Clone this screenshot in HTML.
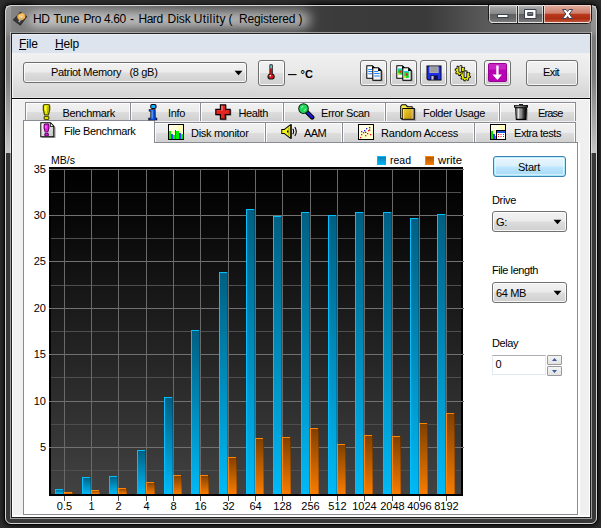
<!DOCTYPE html>
<html><head><meta charset="utf-8"><title>HD Tune Pro 4.60 - Hard Disk Utility</title>
<style>
html,body{margin:0;padding:0}
body{width:601px;height:528px;overflow:hidden;position:relative;background:#2d2d2d;font-family:"Liberation Sans",sans-serif;font-size:11px;color:#000}
*{box-sizing:border-box}
.abs{position:absolute}
#win{position:absolute;left:4px;top:4px;width:594px;height:521px;border:1px solid #060606;border-radius:7px;background:#383838;box-shadow:0 0 5px 1px rgba(0,0,0,.75);overflow:hidden}
#winhi{position:absolute;left:5px;top:5px;width:592px;height:519px;border:1px solid rgba(255,255,255,.78);border-radius:6px;pointer-events:none}
#tbar{position:absolute;left:6px;top:6px;width:590px;height:26px;background:linear-gradient(90deg,#8a8a8a 0,#707070 30px,#4a4a4a 200px,#3b3b3b 330px,#3a3a3a 420px,#5a5a5a 480px,#787878 590px)}
#glow{position:absolute;left:28px;top:11px;width:282px;height:17px;background:rgba(255,255,255,.62);filter:blur(6px);border-radius:8px}
#title{position:absolute;left:34px;top:11px;font-size:12px;line-height:14px;white-space:pre;color:#000;letter-spacing:0px}
.side{position:absolute;top:6px;width:5px;height:147px;background:linear-gradient(180deg,#9c9c9c 0,#8c8c8c 26px,#7a7a7a 32px,#7c7c7c 70px,#c6c6c6 147px)}
#client{position:absolute;left:12px;top:34px;width:578px;height:483px;background:#f0f0f0;box-shadow:inset 1px 0 0 #fff,inset -1px 0 0 #fff,inset 0 -2px 0 #fff}
#inb{position:absolute;left:10px;top:32px;width:582px;height:487px;border:1px solid rgba(255,255,255,.5);pointer-events:none}
#inb2{position:absolute;left:11px;top:33px;width:580px;height:485px;border:1px solid #202020;pointer-events:none}
#menu{position:absolute;left:12px;top:34px;width:578px;height:19px;background:#dde4ee;border-top:1px solid #e9eef7}
.mi{position:absolute;top:37.3px;letter-spacing:-.15px;font-size:12px;line-height:14px}
.mi u{text-decoration:underline;text-underline-offset:1px}
#tool{position:absolute;left:12px;top:53px;width:578px;height:45px;background:linear-gradient(180deg,#f1f1f1 0,#e8e8e8 45%,#d3d3d3 100%);box-shadow:inset 1px 0 0 rgba(255,255,255,.75),inset -1px 0 0 rgba(255,255,255,.6),inset 0 -1px 0 #e4e4e4}
#tline{position:absolute;left:12px;top:98px;width:578px;height:1px;background:#050505}
#tline2{position:absolute;left:12px;top:99px;width:578px;height:1px;background:#fff}
.btn{position:absolute;border:1px solid #707070;border-radius:3px;background:linear-gradient(180deg,#f2f2f2 0,#ebebeb 48%,#dddddd 52%,#cfcfcf 100%);box-shadow:inset 0 0 0 1px rgba(255,255,255,.8);text-align:center}
.tab{position:absolute;border:1px solid #898c95;border-bottom:none;box-shadow:inset 1px 1px 0 rgba(255,255,255,.85),inset -1px 0 0 rgba(255,255,255,.85);background:linear-gradient(180deg,#f2f2f2 0,#ebebeb 50%,#dddddd 52%,#cfcfcf 100%);height:18px;white-space:nowrap}
.tab span{position:absolute;top:3px;line-height:13px;font-size:11px}
.lbl{position:absolute;font-size:11px;line-height:13px;white-space:nowrap}
.chart{position:absolute;left:0;top:0}
.tx{position:absolute;white-space:pre}
.capb{border:1px solid rgba(255,255,255,.62);border-top-color:rgba(255,255,255,.75);background:linear-gradient(180deg,#b6b6b6 0,#a0a0a0 12%,#8a8a8a 47%,#5e5e5e 50%,#686868 80%,#7c7c7c 100%)}
.spin{width:15px;height:10px;border:1px solid #9a9a9a;border-radius:1px;background:linear-gradient(180deg,#f4f4f4,#e2e2e2)}
</style></head><body>
<div id="win"></div>
<div id="tbar"></div>
<div class="side" style="left:6px"></div>
<div class="side" style="left:591px"></div>
<div id="glow"></div>
<div id="winhi"></div>
<div id="inb"></div><div id="inb2"></div>
<div id="client"></div>
<div id="menu"></div>
<div class="mi" style="left:19px"><u>F</u>ile</div>
<div class="mi" style="left:55px"><u>H</u>elp</div>
<div id="tool"></div><div id="tline"></div><div id="tline2"></div>

<div class="abs" style="left:488px;top:5px;width:104px;height:19px;border:1px solid #1c1c1c;border-top:none;border-radius:0 0 5px 5px;background:#fff"></div>
<div class="abs capb" style="left:489px;top:5px;width:28px;height:18px;border-radius:0 0 0 4px"></div>
<div class="abs capb" style="left:518px;top:5px;width:25px;height:18px"></div>
<div class="abs" style="left:517px;top:6px;width:1px;height:17px;background:#2a2a2a"></div>
<div class="abs" style="left:543px;top:6px;width:1px;height:17px;background:#3a1510"></div>
<div class="abs" style="left:544px;top:5px;width:47px;height:18px;border:1px solid rgba(255,255,255,.62);border-top-color:rgba(255,255,255,.75);border-radius:0 0 4px 0;background:linear-gradient(180deg,#dfa999 0,#cf806b 45%,#bb3a1e 52%,#ad2d12 78%,#bd5238 100%)"></div>
<svg class="abs" style="left:489px;top:5px" width="102" height="18" viewBox="0 0 102 18">
<rect x="8.5" y="9.5" width="10.5" height="3" fill="#fff" stroke="#3a3f4f" stroke-width="1"/>
<path d="M35.5 4.5h11.5v9h-11.5z M38.7 7.6v2.8h5.1v-2.8z" fill="#fff" fill-rule="evenodd" stroke="#3a3f4f" stroke-width="1"/>
<path d="M73.5 4.5h3.6l1.5 2 1.5-2h3.6l-3.3 4.5 3.3 4.5h-3.6l-1.5-2-1.5 2h-3.6l3.3-4.5z" fill="#fff" stroke="#3c4254" stroke-width="1" stroke-linejoin="round"/>
</svg>

<svg class="abs" style="left:10px;top:8px" width="20" height="20" viewBox="10 8 20 20"><path d="M20.3 11.7L27.3 16.4 20.4 25.7 12.8 20.1z" fill="#2a2a2c"/><path d="M20.3 12.6L26.2 16.5 20.3 24.4 14 19.9z" fill="#3a3a3e"/><ellipse cx="21.3" cy="16.7" rx="4.1" ry="3.5" fill="#f0b448" transform="rotate(-20 21.3 16.7)"/><ellipse cx="21.6" cy="16" rx="2.6" ry="1.8" fill="#f8d080" opacity=".7" transform="rotate(-20 21.3 16.7)"/><circle cx="21.2" cy="16.8" r="1.1" fill="#d4d4e4"/><path d="M20.6 18.2l-2.4 3.4 1.4 1 2-3.8z" fill="#b4aaa2"/></svg>
<div class="btn" style="left:23px;top:62px;width:224px;height:21px"></div>
<svg class="abs" style="left:234px;top:70px" width="9" height="6" viewBox="0 0 9 6"><path d="M0.5 0.8h8L4.5 5.2z" fill="#000"/></svg>
<div class="btn" style="left:258px;top:60px;width:27px;height:26px"></div>
<svg class="abs" style="left:264px;top:64.3px" width="16" height="16" viewBox="0 0 16 16"><path d="M5.4 1.2q0-1 1-1h1.4q1 0 1 1v8.2q2 1 2 3 0 3.2-3.7 3.2T3.4 12.4q0-2 2-3z" fill="#1a1a1a"/><path d="M6.3 1.4h1.6v9l1.6 1.2v1.2l-1.2 1.6H6l-1.4-1.4v-1.4l1.7-1.2z" fill="#e81010"/><rect x="6.3" y="1.2" width="1.6" height="3.2" fill="#30e0e8"/><rect x="5.6" y="11" width="1.4" height="1.4" fill="#fff"/></svg>
<div class="btn" style="left:360px;top:60px;width:27px;height:26px"></div>
<div class="btn" style="left:390px;top:60px;width:27px;height:26px"></div>
<div class="btn" style="left:420px;top:60px;width:27px;height:26px"></div>
<div class="btn" style="left:450px;top:60px;width:27px;height:26px"></div>
<div class="btn" style="left:484px;top:60px;width:27px;height:26px"></div>
<div class="btn" style="left:526px;top:60px;width:52px;height:26px"></div>
<svg class="abs" style="left:366px;top:65px" width="17" height="17" viewBox="0 0 17 17"><path d="M7.6 3.6h6.6l2.6 2.6v10H7.6z" fill="#555" opacity=".45"/><path d="M0.3 0.3h6.4l3 3v10.4H0.3z" fill="#000"/><path d="M1.3 1.3h4.8v2.6h2.6v8.8H1.3z" fill="#fff"/><path d="M2.2 4h4v1h-4zM2.2 6h4v1h-4zM2.2 8.3h4v1h-4z" fill="#1888ff"/>
<path d="M6.3 2.3h6.4l3 3v10.4H6.3z" fill="#000"/><path d="M7.3 3.3h4.8v2.6h2.6v8.8H7.3z" fill="#f4f4f4"/><path d="M8.2 6h4v1h-4zM8.2 8h5.4v1H8.2zM8.2 10.4h5.4v1H8.2z" fill="#1888ff"/></svg>
<svg class="abs" style="left:396px;top:65px" width="17" height="17" viewBox="0 0 17 17"><path d="M7.6 3.6h6.6l2.6 2.6v10H7.6z" fill="#555" opacity=".45"/><path d="M0.3 0.3h6.4l3 3v10.4H0.3z" fill="#000"/><path d="M1.3 1.3h4.8v2.6h2.6v8.8H1.3z" fill="#fff"/><rect x="2" y="3.6" width="4.4" height="6" fill="#18d838"/><rect x="2" y="3.6" width="4.4" height="1.2" fill="#20c8f0"/><rect x="3.6" y="5.6" width="1.8" height="2" fill="#f01818"/><rect x="2" y="8" width="1.6" height="1.6" fill="#e8e020"/>
<path d="M6.3 2.3h6.4l3 3v10.4H6.3z" fill="#000"/><path d="M7.3 3.3h4.8v2.6h2.6v8.8H7.3z" fill="#f4f4f4"/><rect x="8.2" y="6" width="4.6" height="7" fill="#18d838"/><rect x="8.2" y="6" width="4.6" height="1.2" fill="#20c8f0"/><rect x="10" y="8.4" width="1.8" height="2" fill="#f01818"/><rect x="8.2" y="11" width="1.6" height="2" fill="#e8e020"/></svg>
<svg class="abs" style="left:426px;top:65px" width="16" height="16" viewBox="0 0 16 16"><path d="M0.5 0.5h15v15H2L0.5 14z" fill="#000"/><path d="M1.4 1.4h13.2v13.2H2.4l-1-1z" fill="#2030e8"/><rect x="3.4" y="1.4" width="9.2" height="6.6" fill="#b8b8b8"/><path d="M4.4 2.6h7.2v1H4.4zM4.4 4.6h7.2v1H4.4zM4.4 6.4h7.2v.8H4.4z" fill="#808080"/><rect x="4.4" y="10.4" width="7.4" height="4.2" fill="#101040"/><rect x="5.4" y="11" width="2.2" height="3.6" fill="#c8c8c8"/></svg>
<svg class="abs" style="left:454px;top:64px" width="18" height="18" viewBox="0 0 18 18"><path d="M11.80 6.75 L11.42 8.64 L10.34 8.61 L9.62 9.68 L10.05 10.67 L8.45 11.73 L7.71 10.95 L6.44 11.19 L6.05 12.20 L4.16 11.82 L4.19 10.74 L3.12 10.02 L2.13 10.45 L1.07 8.85 L1.85 8.11 L1.61 6.84 L0.60 6.45 L0.98 4.56 L2.06 4.59 L2.78 3.52 L2.35 2.53 L3.95 1.47 L4.69 2.25 L5.96 2.01 L6.35 1.00 L8.24 1.38 L8.21 2.46 L9.28 3.18 L10.27 2.75 L11.33 4.35 L10.55 5.09 L10.79 6.36z" fill="#0a0a0a"/><path d="M10.70 6.72 L10.39 8.24 L9.44 8.17 L8.87 9.01 L9.29 9.87 L8.00 10.72 L7.38 10.00 L6.38 10.20 L6.08 11.10 L4.56 10.79 L4.63 9.84 L3.79 9.27 L2.93 9.69 L2.08 8.40 L2.80 7.78 L2.60 6.78 L1.70 6.48 L2.01 4.96 L2.96 5.03 L3.53 4.19 L3.11 3.33 L4.40 2.48 L5.02 3.20 L6.02 3.00 L6.32 2.10 L7.84 2.41 L7.77 3.36 L8.61 3.93 L9.47 3.51 L10.32 4.80 L9.60 5.42 L9.80 6.42z" fill="#ecec00"/><path d="M4.40 2.40h3.6v5.2q0 1.4-1.8 1.4t-1.8-1.4z" fill="#1c1c14"/><rect x="5.30" y="2.00" width="1.9" height="5.8" fill="#b0b0b0"/><rect x="5.70" y="2.30" width=".8" height="5.2" fill="#f4f4f4"/><path d="M5.30 2.00l.95-1 .95 1z" fill="#333"/><path d="M17.00 12.05 L16.62 13.94 L15.54 13.91 L14.82 14.98 L15.25 15.97 L13.65 17.03 L12.91 16.25 L11.64 16.49 L11.25 17.50 L9.36 17.12 L9.39 16.04 L8.32 15.32 L7.33 15.75 L6.27 14.15 L7.05 13.41 L6.81 12.14 L5.80 11.75 L6.18 9.86 L7.26 9.89 L7.98 8.82 L7.55 7.83 L9.15 6.77 L9.89 7.55 L11.16 7.31 L11.55 6.30 L13.44 6.68 L13.41 7.76 L14.48 8.48 L15.47 8.05 L16.53 9.65 L15.75 10.39 L15.99 11.66z" fill="#0a0a0a"/><path d="M15.90 12.02 L15.59 13.54 L14.64 13.47 L14.07 14.31 L14.49 15.17 L13.20 16.02 L12.58 15.30 L11.58 15.50 L11.28 16.40 L9.76 16.09 L9.83 15.14 L8.99 14.57 L8.13 14.99 L7.28 13.70 L8.00 13.08 L7.80 12.08 L6.90 11.78 L7.21 10.26 L8.16 10.33 L8.73 9.49 L8.31 8.63 L9.60 7.78 L10.22 8.50 L11.22 8.30 L11.52 7.40 L13.04 7.71 L12.97 8.66 L13.81 9.23 L14.67 8.81 L15.52 10.10 L14.80 10.72 L15.00 11.72z" fill="#ecec00"/><path d="M9.60 7.70h3.6v5.2q0 1.4-1.8 1.4t-1.8-1.4z" fill="#1c1c14"/><rect x="10.50" y="7.30" width="1.9" height="5.8" fill="#b0b0b0"/><rect x="10.90" y="7.60" width=".8" height="5.2" fill="#f4f4f4"/><path d="M10.50 7.30l.95-1 .95 1z" fill="#333"/></svg>
<svg class="abs" style="left:488px;top:63px" width="19" height="19" viewBox="0 0 19 19"><rect x="0" y="0" width="19" height="19" rx="2" fill="#8c0088"/><rect x="0.8" y="0.8" width="17.4" height="17.4" rx="1.4" fill="#ba00b4"/><path d="M1 1h17v5.5H1z" fill="#d848d4" opacity=".5"/><path d="M8.3 2.4h2.3v9h3.4L9.45 17 4.4 11.4h3.9z" fill="#fff"/></svg>
<div class="tab" style="left:25px;top:102px;width:106px;height:19px"></div>
<div class="tab" style="left:130px;top:102px;width:71px;height:19px"></div>
<div class="tab" style="left:200px;top:102px;width:84px;height:19px"></div>
<div class="tab" style="left:283px;top:102px;width:103px;height:19px"></div>
<div class="tab" style="left:385px;top:102px;width:115px;height:19px"></div>
<div class="tab" style="left:499px;top:102px;width:77px;height:19px"></div>
<div class="tab" style="left:154px;top:122px;width:112px;height:21px"></div>
<div class="tab" style="left:265px;top:122px;width:78px;height:21px"></div>
<div class="tab" style="left:342px;top:122px;width:133px;height:21px"></div>
<div class="tab" style="left:474px;top:122px;width:102px;height:21px"></div>
<div class="abs" style="left:23px;top:142px;width:555px;height:373px;border:1px solid #898c95;background:#fff"></div>
<div class="abs" style="left:578px;top:143px;width:2px;height:372px;background:#fff"></div>
<div class="abs" style="left:23px;top:120px;width:132px;height:23px;border:1px solid #898c95;border-bottom:none;background:#fff"></div>
<svg class="abs" style="left:42px;top:104px" width="10" height="16" viewBox="0 0 10 16"><path d="M2.6 0h3.8q1.9 0 1.9 1.8V6L6.9 11.4H2.1L0.7 6V1.8Q0.7 0 2.6 0z" fill="#4e4e00"/><path d="M3 1.1h3q1 0 1 1v3.7L5.9 10.3H3.1L2 5.8V2.1q0-1 1-1z" fill="#e4e400"/><path d="M3 1.9h1.2v5.4H3.5L2.8 5.4z" fill="#fcfc78"/><path d="M5.7 1.6h1v4.2L5.9 9.6h-.8z" fill="#a4a400"/>
<rect x="1.6" y="12" width="5.8" height="4" rx="1.4" fill="#4e4e00"/><rect x="2.7" y="13" width="3.6" height="1.9" rx=".7" fill="#e4e400"/></svg>
<svg class="abs" style="left:146px;top:104px" width="13" height="17" viewBox="0 0 13 17"><rect x="4.2" y="0.1" width="6.4" height="4.8" rx="1.8" fill="#0a0a18"/><rect x="5.2" y="1" width="4.2" height="2.9" rx="1.2" fill="#10b4ff"/>
<path d="M2.8 5.2h6.8v8.6h1.6v2.5H2.3v-2.5h2.1V7.4H2.8z" fill="#06061c"/><path d="M3.8 6h4.9v9.4H5.3V6.9H3.8z" fill="#0c58f8"/><path d="M5.4 6.2h1.5v9H5.4z" fill="#4c98ff"/><path d="M3.2 14.4h7.2v1.1H3.2z" fill="#0c58f8"/></svg>
<svg class="abs" style="left:215px;top:104px" width="17" height="17" viewBox="0 0 17 17"><path d="M6 1.2h6v4.6h4.6v6H12v4.8H6v-4.8H1.4v-6H6z" fill="#777" opacity=".45"/><path d="M4.8 0.2h6.4v4.6h4.6v6.4h-4.6v4.6H4.8v-4.6H0.2V4.8h4.6z" fill="#120000"/><path d="M6 1.4h4V6h4.6v4H10v4.6H6V10H1.4V6H6z" fill="#e32222"/><path d="M6.3 1.8h1.5v4.6H1.8v-.2h4.5z" fill="#ff8080" opacity=".85"/><path d="M9 10h1v4.6H9zM13.6 9h1v1h-1z" fill="#a81010"/></svg>
<svg class="abs" style="left:298px;top:103px" width="17" height="17" viewBox="0 0 17 17"><path d="M8.4 8.6l5.8 5.8" stroke="#000" stroke-width="4.4" stroke-linecap="round"/><path d="M8.8 9l5.2 5.2" stroke="#1a1ad8" stroke-width="2.4" stroke-linecap="round"/>
<circle cx="5.5" cy="5.6" r="5.3" fill="#06200a"/><circle cx="5.5" cy="5.6" r="4.3" fill="#20d858"/><path d="M3.2 5l2-2M6 7.8l2-2" stroke="#c8ffd4" stroke-width="1"/></svg>
<svg class="abs" style="left:400px;top:104px" width="17" height="17" viewBox="0 0 17 17"><path d="M1.4 3l1.8-2h4.2l1.6 2H14v1.8h2.2V17H3.2L1.4 15.8z" fill="#666" opacity=".35"/><path d="M0.2 2L1.8 0.2H6L7.6 2.2h5V4h2.2v11.8H2L0.2 14.6z" fill="#000"/><path d="M1.2 2.3l1-1.1h3.4L7 3.2h4.8V4H2.3v10.5l-1.1-.7z" fill="#f6ea44"/><rect x="3.2" y="5" width="10.6" height="9.8" fill="url(#gfold)"/><rect x="3.2" y="5" width=".9" height="9.8" fill="#fff6a0"/><rect x="11.7" y="5" width=".8" height="9.8" fill="#d0d0c8"/>
<defs><linearGradient id="gfold" x1="0" y1="0" x2="1" y2="1"><stop offset="0" stop-color="#f0d030"/><stop offset="1" stop-color="#c08c08"/></linearGradient></defs></svg>
<svg class="abs" style="left:513px;top:104px" width="17" height="17" viewBox="0 0 17 17"><path d="M3.4 4.6h11.8l-.6 12H4z" fill="#555" opacity=".4"/><rect x="6" y="0.1" width="4" height="1.4" fill="#000"/><rect x="1" y="1" width="14" height="2.7" rx=".6" fill="#000"/><rect x="2" y="1.7" width="11.8" height="1" fill="url(#gtr2)"/><path d="M2.1 3.5H14l-.6 12.4H2.8z" fill="#000"/><path d="M3.1 4.3h9.8l-.4 10.5H3.6z" fill="url(#gtr)"/>
<defs><linearGradient id="gtr" x1="0" y1="0" x2="1" y2="0"><stop offset="0" stop-color="#6e6e6e"/><stop offset=".16" stop-color="#aaa"/><stop offset=".27" stop-color="#f4f4f4"/><stop offset=".36" stop-color="#9c9c9c"/><stop offset=".56" stop-color="#848484"/><stop offset=".76" stop-color="#383838"/><stop offset="1" stop-color="#0c0c0c"/></linearGradient><linearGradient id="gtr2" x1="0" y1="0" x2="1" y2="0"><stop offset="0" stop-color="#9a9a9a"/><stop offset=".3" stop-color="#d8d8d8"/><stop offset="1" stop-color="#444"/></linearGradient></defs></svg>
<svg class="abs" style="left:40px;top:122px" width="16" height="16" viewBox="0 0 16 16"><path d="M1.8 1.8h10.2l3.6 3.4V16H1.8z" fill="#555" opacity=".5"/><path d="M0.3 0.3h10.4l3.6 3.6v11.4H0.3z" fill="#000"/><path d="M1.3 1.3h8.6v3.4h3.4v9.6H1.3z" fill="url(#gpage)"/><path d="M10.7 1.5l2.4 2.4h-2.4z" fill="#fff"/>
<path d="M5.4 1.6h2.4q1.6 0 1.6 1.6v3L8.2 10.6H4.8L3.6 6.2v-3q0-1.6 1.8-1.6z" fill="#58005a"/><path d="M5.6 2.6h2q.8 0 .8.8v2.7L7.5 9.7H5.5L4.6 6.1V3.4q0-.8 1-.8z" fill="#ea18ea"/><path d="M5.5 3.2h1v3.6h-.5L5.3 5.4z" fill="#ff88ff"/>
<rect x="4.4" y="11.1" width="4.4" height="3.2" rx="1.1" fill="#58005a"/><rect x="5.3" y="11.8" width="2.6" height="1.6" rx=".6" fill="#ea18ea"/>
<defs><linearGradient id="gpage" x1="0" y1="0" x2="1" y2="1"><stop offset="0" stop-color="#fafafa"/><stop offset="1" stop-color="#c4c4c4"/></linearGradient></defs></svg>
<svg class="abs" style="left:168px;top:124px" width="16" height="16" viewBox="0 0 16 16"><rect x="0" y="0" width="16" height="16" fill="#000"/><rect x="1" y="1" width="14" height="14" fill="#ffffb8"/><rect x="1" y="1" width="8" height="6" fill="#ffffe0"/>
<path d="M1 7h2v8H1zM5 11h2v4H5zM8 7h3v8H8zM13 10h2v5h-2z" fill="#00f000"/><path d="M3 10h2v5H3zM7 6h1v9H7zM11 9h2v6h-2z" fill="#3c3cff"/></svg>
<svg class="abs" style="left:281px;top:124px" width="17" height="16" viewBox="0 0 17 16"><path d="M0.3 5h2.8L9.2 0.2h1.6v14.6H9.2L3.1 10H0.3z" fill="#000"/><path d="M1.2 5.9h2.2L9.2 1.6v11.8L3.4 9.1H1.2z" fill="#f2f21c"/><path d="M7.2 3.4h1.2v8.2H7.2z" fill="#b4b400"/><rect x="6" y="6.5" width="1.4" height="2" fill="#000"/>
<path d="M11.8 4.8q1.7 2.7 0 5.4M13.8 3q3 4.5 0 9" stroke="#000" stroke-width="1.1" fill="none"/></svg>
<svg class="abs" style="left:358px;top:124px" width="16" height="16" viewBox="0 0 16 16"><rect x="0" y="0" width="16" height="16" fill="#000"/><rect x="1" y="1" width="14" height="14" fill="#ffffc8"/><rect x="1" y="1" width="9" height="7" fill="#ffffe8"/>
<g fill="#f01010"><rect x="2" y="13" width="1.3" height="1.3"/><rect x="3" y="10" width="1.3" height="1.3"/><rect x="5" y="8" width="1.3" height="1.3"/><rect x="7" y="11" width="1.3" height="1.3"/><rect x="9" y="9" width="1.3" height="1.3"/><rect x="12" y="10" width="1.3" height="1.3"/><rect x="10" y="6" width="1.3" height="1.3"/></g>
<g fill="#2020f0"><rect x="3" y="7" width="1.3" height="1.3"/><rect x="6" y="6" width="1.3" height="1.3"/><rect x="8" y="4" width="1.3" height="1.3"/><rect x="11" y="3" width="1.3" height="1.3"/><rect x="11" y="5.4" width="1.3" height="1.3"/><rect x="7" y="7.6" width="1.3" height="1.3"/></g></svg>
<svg class="abs" style="left:490px;top:124px" width="16" height="16" viewBox="0 0 16 16"><rect x="0" y="0" width="16" height="16" fill="#000"/><rect x="1" y="1" width="14" height="14" fill="#ffffc0"/><rect x="1" y="1" width="9" height="5" fill="#ffffe8"/>
<path d="M1 7h2v8H1z" fill="#00e000"/><path d="M3 10h2v5H3z" fill="#3c3cff"/><path d="M5 12h1v3H5z" fill="#00e000"/>
<rect x="6" y="6" width="10" height="10" fill="#000"/><rect x="7" y="7" width="8" height="2" fill="#2050e0"/><rect x="7" y="9" width="8" height="6" fill="#fff"/>
<g fill="#f01010"><rect x="8" y="10" width="1" height="1"/><rect x="10.5" y="10" width="1" height="1"/><rect x="13" y="10" width="1" height="1"/><rect x="8" y="12" width="1" height="1"/><rect x="10.5" y="12" width="1" height="1"/><rect x="13" y="12" width="1" height="1"/></g></svg>
<div class="abs" style="left:493px;top:156px;width:73px;height:21px;border:1px solid #3c7fb1;border-radius:3px;background:linear-gradient(180deg,#eaf6fd 0,#d9f0fc 48%,#bee6fd 52%,#a7d9f5 100%);box-shadow:inset 0 0 0 1px #48d8fb55, inset 0 0 0 2px rgba(255,255,255,.5)"></div>
<div class="btn" style="left:492px;top:211px;width:75px;height:21px"></div>
<svg class="abs" style="left:553px;top:219px" width="9" height="6" viewBox="0 0 9 6"><path d="M0.5 0.8h8L4.5 5.2z" fill="#000"/></svg>
<div class="btn" style="left:492px;top:282px;width:75px;height:21px"></div>
<svg class="abs" style="left:553px;top:290px" width="9" height="6" viewBox="0 0 9 6"><path d="M0.5 0.8h8L4.5 5.2z" fill="#000"/></svg>
<div class="abs" style="left:492px;top:355px;width:54px;height:20px;border:1px solid #e3e9ef;border-top-color:#abadb3;background:#fff"></div>
<div class="abs spin" style="left:547px;top:355px"></div><div class="abs spin" style="left:547px;top:366px"></div>
<svg class="abs" style="left:552px;top:358px" width="5" height="3" viewBox="0 0 5 3"><path d="M0 3h5L2.5 0z" fill="#3a5a9a"/></svg>
<svg class="abs" style="left:552px;top:370px" width="5" height="3" viewBox="0 0 5 3"><path d="M0 0h5L2.5 3z" fill="#3a5a9a"/></svg>
<svg class="chart" width="601" height="528" viewBox="0 0 601 528" shape-rendering="crispEdges">
<defs>
<linearGradient id="bg" x1="0" y1="0" x2="0" y2="1"><stop offset="0" stop-color="#000"/><stop offset="0.15" stop-color="#070707"/><stop offset="1" stop-color="#424242"/></linearGradient>
<linearGradient id="rd" x1="0" y1="0" x2="0" y2="1"><stop offset="0" stop-color="#005f82"/><stop offset="1" stop-color="#00b9f6"/></linearGradient>
<linearGradient id="rdr" x1="0" y1="0" x2="0" y2="1"><stop offset="0" stop-color="#004a66"/><stop offset="1" stop-color="#0090c4"/></linearGradient>
<linearGradient id="wr" x1="0" y1="0" x2="0" y2="1"><stop offset="0" stop-color="#7e3f00"/><stop offset="1" stop-color="#f87c00"/></linearGradient>
<linearGradient id="wrr" x1="0" y1="0" x2="0" y2="1"><stop offset="0" stop-color="#5e2f00"/><stop offset="1" stop-color="#c46200"/></linearGradient>
<linearGradient id="rdl" x1="0" y1="0" x2="0" y2="1"><stop offset="0" stop-color="#0a7cae"/><stop offset="1" stop-color="#00b9f6"/></linearGradient>
<linearGradient id="wrl" x1="0" y1="0" x2="0" y2="1"><stop offset="0" stop-color="#a85400"/><stop offset="1" stop-color="#f87c00"/></linearGradient>
</defs>
<rect x="49" y="167" width="414" height="329" fill="#000"/>
<rect x="51" y="169" width="410" height="325" fill="url(#bg)"/>
<rect x="51" y="470" width="410" height="1" fill="#4e4e4e"/>
<rect x="49" y="447" width="415" height="1" fill="#717171"/>
<rect x="51" y="424" width="410" height="1" fill="#4e4e4e"/>
<rect x="49" y="401" width="415" height="1" fill="#717171"/>
<rect x="51" y="377" width="410" height="1" fill="#4e4e4e"/>
<rect x="49" y="354" width="415" height="1" fill="#717171"/>
<rect x="51" y="331" width="410" height="1" fill="#4e4e4e"/>
<rect x="49" y="308" width="415" height="1" fill="#717171"/>
<rect x="51" y="285" width="410" height="1" fill="#4e4e4e"/>
<rect x="49" y="261" width="415" height="1" fill="#717171"/>
<rect x="51" y="238" width="410" height="1" fill="#4e4e4e"/>
<rect x="49" y="215" width="415" height="1" fill="#717171"/>
<rect x="51" y="192" width="410" height="1" fill="#4e4e4e"/>
<rect x="49" y="169" width="415" height="1" fill="#717171"/>
<rect x="64" y="169" width="1" height="325" fill="#696969"/>
<rect x="64" y="496" width="1" height="5" fill="#555"/>
<rect x="91" y="169" width="1" height="325" fill="#696969"/>
<rect x="91" y="496" width="1" height="5" fill="#555"/>
<rect x="118" y="169" width="1" height="325" fill="#696969"/>
<rect x="118" y="496" width="1" height="5" fill="#555"/>
<rect x="146" y="169" width="1" height="325" fill="#696969"/>
<rect x="146" y="496" width="1" height="5" fill="#555"/>
<rect x="173" y="169" width="1" height="325" fill="#696969"/>
<rect x="173" y="496" width="1" height="5" fill="#555"/>
<rect x="200" y="169" width="1" height="325" fill="#696969"/>
<rect x="200" y="496" width="1" height="5" fill="#555"/>
<rect x="228" y="169" width="1" height="325" fill="#696969"/>
<rect x="228" y="496" width="1" height="5" fill="#555"/>
<rect x="255" y="169" width="1" height="325" fill="#696969"/>
<rect x="255" y="496" width="1" height="5" fill="#555"/>
<rect x="282" y="169" width="1" height="325" fill="#696969"/>
<rect x="282" y="496" width="1" height="5" fill="#555"/>
<rect x="310" y="169" width="1" height="325" fill="#696969"/>
<rect x="310" y="496" width="1" height="5" fill="#555"/>
<rect x="337" y="169" width="1" height="325" fill="#696969"/>
<rect x="337" y="496" width="1" height="5" fill="#555"/>
<rect x="364" y="169" width="1" height="325" fill="#696969"/>
<rect x="364" y="496" width="1" height="5" fill="#555"/>
<rect x="392" y="169" width="1" height="325" fill="#696969"/>
<rect x="392" y="496" width="1" height="5" fill="#555"/>
<rect x="419" y="169" width="1" height="325" fill="#696969"/>
<rect x="419" y="496" width="1" height="5" fill="#555"/>
<rect x="446" y="169" width="1" height="325" fill="#696969"/>
<rect x="446" y="496" width="1" height="5" fill="#555"/>
<rect x="55" y="489" width="9" height="5" fill="url(#rd)"/>
<rect x="63" y="489" width="1" height="5" fill="url(#rdr)"/>
<rect x="55" y="489" width="1" height="5" fill="#00bfff"/>
<rect x="55" y="489" width="8" height="1" fill="#00bfff"/>
<rect x="64" y="492" width="9" height="2" fill="url(#wr)"/>
<rect x="72" y="492" width="1" height="2" fill="url(#wrr)"/>
<rect x="64" y="492" width="1" height="2" fill="#ff8400"/>
<rect x="64" y="492" width="8" height="1" fill="#ff8400"/>
<rect x="82" y="477" width="9" height="17" fill="url(#rd)"/>
<rect x="90" y="477" width="1" height="17" fill="url(#rdr)"/>
<rect x="82" y="477" width="1" height="17" fill="#00bfff"/>
<rect x="82" y="477" width="8" height="1" fill="#00bfff"/>
<rect x="91" y="490" width="9" height="4" fill="url(#wr)"/>
<rect x="99" y="490" width="1" height="4" fill="url(#wrr)"/>
<rect x="91" y="490" width="1" height="4" fill="#ff8400"/>
<rect x="91" y="490" width="8" height="1" fill="#ff8400"/>
<rect x="109" y="476" width="9" height="18" fill="url(#rd)"/>
<rect x="117" y="476" width="1" height="18" fill="url(#rdr)"/>
<rect x="109" y="476" width="1" height="18" fill="#00bfff"/>
<rect x="109" y="476" width="8" height="1" fill="#00bfff"/>
<rect x="118" y="488" width="9" height="6" fill="url(#wr)"/>
<rect x="126" y="488" width="1" height="6" fill="url(#wrr)"/>
<rect x="118" y="488" width="1" height="6" fill="#ff8400"/>
<rect x="118" y="488" width="8" height="1" fill="#ff8400"/>
<rect x="137" y="450" width="9" height="44" fill="url(#rd)"/>
<rect x="145" y="450" width="1" height="44" fill="url(#rdr)"/>
<rect x="137" y="450" width="1" height="44" fill="#00bfff"/>
<rect x="137" y="450" width="8" height="1" fill="#00bfff"/>
<rect x="146" y="482" width="9" height="12" fill="url(#wr)"/>
<rect x="154" y="482" width="1" height="12" fill="url(#wrr)"/>
<rect x="146" y="482" width="1" height="12" fill="#ff8400"/>
<rect x="146" y="482" width="8" height="1" fill="#ff8400"/>
<rect x="164" y="397" width="9" height="97" fill="url(#rd)"/>
<rect x="172" y="397" width="1" height="97" fill="url(#rdr)"/>
<rect x="164" y="397" width="1" height="97" fill="#00bfff"/>
<rect x="164" y="397" width="8" height="1" fill="#00bfff"/>
<rect x="173" y="475" width="9" height="19" fill="url(#wr)"/>
<rect x="181" y="475" width="1" height="19" fill="url(#wrr)"/>
<rect x="173" y="475" width="1" height="19" fill="#ff8400"/>
<rect x="173" y="475" width="8" height="1" fill="#ff8400"/>
<rect x="191" y="330" width="9" height="164" fill="url(#rd)"/>
<rect x="199" y="330" width="1" height="164" fill="url(#rdr)"/>
<rect x="191" y="330" width="1" height="164" fill="#00bfff"/>
<rect x="191" y="330" width="8" height="1" fill="#00bfff"/>
<rect x="200" y="475" width="9" height="19" fill="url(#wr)"/>
<rect x="208" y="475" width="1" height="19" fill="url(#wrr)"/>
<rect x="200" y="475" width="1" height="19" fill="#ff8400"/>
<rect x="200" y="475" width="8" height="1" fill="#ff8400"/>
<rect x="219" y="272" width="9" height="222" fill="url(#rd)"/>
<rect x="227" y="272" width="1" height="222" fill="url(#rdr)"/>
<rect x="219" y="272" width="1" height="222" fill="#00bfff"/>
<rect x="219" y="272" width="8" height="1" fill="#00bfff"/>
<rect x="228" y="457" width="9" height="37" fill="url(#wr)"/>
<rect x="236" y="457" width="1" height="37" fill="url(#wrr)"/>
<rect x="228" y="457" width="1" height="37" fill="#ff8400"/>
<rect x="228" y="457" width="8" height="1" fill="#ff8400"/>
<rect x="246" y="209" width="9" height="285" fill="url(#rd)"/>
<rect x="254" y="209" width="1" height="285" fill="url(#rdr)"/>
<rect x="246" y="209" width="1" height="285" fill="#00bfff"/>
<rect x="246" y="209" width="8" height="1" fill="#00bfff"/>
<rect x="255" y="438" width="9" height="56" fill="url(#wr)"/>
<rect x="263" y="438" width="1" height="56" fill="url(#wrr)"/>
<rect x="255" y="438" width="1" height="56" fill="#ff8400"/>
<rect x="255" y="438" width="8" height="1" fill="#ff8400"/>
<rect x="273" y="216" width="9" height="278" fill="url(#rd)"/>
<rect x="281" y="216" width="1" height="278" fill="url(#rdr)"/>
<rect x="273" y="216" width="1" height="278" fill="#00bfff"/>
<rect x="273" y="216" width="8" height="1" fill="#00bfff"/>
<rect x="282" y="437" width="9" height="57" fill="url(#wr)"/>
<rect x="290" y="437" width="1" height="57" fill="url(#wrr)"/>
<rect x="282" y="437" width="1" height="57" fill="#ff8400"/>
<rect x="282" y="437" width="8" height="1" fill="#ff8400"/>
<rect x="301" y="212" width="9" height="282" fill="url(#rd)"/>
<rect x="309" y="212" width="1" height="282" fill="url(#rdr)"/>
<rect x="301" y="212" width="1" height="282" fill="#00bfff"/>
<rect x="301" y="212" width="8" height="1" fill="#00bfff"/>
<rect x="310" y="428" width="9" height="66" fill="url(#wr)"/>
<rect x="318" y="428" width="1" height="66" fill="url(#wrr)"/>
<rect x="310" y="428" width="1" height="66" fill="#ff8400"/>
<rect x="310" y="428" width="8" height="1" fill="#ff8400"/>
<rect x="328" y="215" width="9" height="279" fill="url(#rd)"/>
<rect x="336" y="215" width="1" height="279" fill="url(#rdr)"/>
<rect x="328" y="215" width="1" height="279" fill="#00bfff"/>
<rect x="328" y="215" width="8" height="1" fill="#00bfff"/>
<rect x="337" y="444" width="9" height="50" fill="url(#wr)"/>
<rect x="345" y="444" width="1" height="50" fill="url(#wrr)"/>
<rect x="337" y="444" width="1" height="50" fill="#ff8400"/>
<rect x="337" y="444" width="8" height="1" fill="#ff8400"/>
<rect x="355" y="212" width="9" height="282" fill="url(#rd)"/>
<rect x="363" y="212" width="1" height="282" fill="url(#rdr)"/>
<rect x="355" y="212" width="1" height="282" fill="#00bfff"/>
<rect x="355" y="212" width="8" height="1" fill="#00bfff"/>
<rect x="364" y="435" width="9" height="59" fill="url(#wr)"/>
<rect x="372" y="435" width="1" height="59" fill="url(#wrr)"/>
<rect x="364" y="435" width="1" height="59" fill="#ff8400"/>
<rect x="364" y="435" width="8" height="1" fill="#ff8400"/>
<rect x="383" y="212" width="9" height="282" fill="url(#rd)"/>
<rect x="391" y="212" width="1" height="282" fill="url(#rdr)"/>
<rect x="383" y="212" width="1" height="282" fill="#00bfff"/>
<rect x="383" y="212" width="8" height="1" fill="#00bfff"/>
<rect x="392" y="436" width="9" height="58" fill="url(#wr)"/>
<rect x="400" y="436" width="1" height="58" fill="url(#wrr)"/>
<rect x="392" y="436" width="1" height="58" fill="#ff8400"/>
<rect x="392" y="436" width="8" height="1" fill="#ff8400"/>
<rect x="410" y="218" width="9" height="276" fill="url(#rd)"/>
<rect x="418" y="218" width="1" height="276" fill="url(#rdr)"/>
<rect x="410" y="218" width="1" height="276" fill="#00bfff"/>
<rect x="410" y="218" width="8" height="1" fill="#00bfff"/>
<rect x="419" y="423" width="9" height="71" fill="url(#wr)"/>
<rect x="427" y="423" width="1" height="71" fill="url(#wrr)"/>
<rect x="419" y="423" width="1" height="71" fill="#ff8400"/>
<rect x="419" y="423" width="8" height="1" fill="#ff8400"/>
<rect x="437" y="214" width="9" height="280" fill="url(#rd)"/>
<rect x="445" y="214" width="1" height="280" fill="url(#rdr)"/>
<rect x="437" y="214" width="1" height="280" fill="#00bfff"/>
<rect x="437" y="214" width="8" height="1" fill="#00bfff"/>
<rect x="446" y="413" width="9" height="81" fill="url(#wr)"/>
<rect x="454" y="413" width="1" height="81" fill="url(#wrr)"/>
<rect x="446" y="413" width="1" height="81" fill="#ff8400"/>
<rect x="446" y="413" width="8" height="1" fill="#ff8400"/>
<rect x="377" y="156" width="9" height="9" fill="url(#rdl)"/><rect x="377" y="156" width="9" height="1" fill="#00bfff"/><rect x="377" y="156" width="1" height="9" fill="#00bfff"/>
<rect x="425" y="156" width="9" height="9" fill="url(#wrl)"/><rect x="425" y="156" width="9" height="1" fill="#ff8400"/><rect x="425" y="156" width="1" height="9" fill="#ff8400"/>
<g font-family="Liberation Sans, sans-serif" font-size="11" fill="#000" shape-rendering="auto">
<text x="390" y="164" textLength="21" lengthAdjust="spacingAndGlyphs">read</text>
<text x="438" y="164" textLength="24" lengthAdjust="spacingAndGlyphs">write</text>
<text x="51" y="164" textLength="24" lengthAdjust="spacingAndGlyphs">MB/s</text>
<text x="46" y="451" text-anchor="end">5</text>
<text x="46" y="405" text-anchor="end">10</text>
<text x="46" y="358" text-anchor="end">15</text>
<text x="46" y="312" text-anchor="end">20</text>
<text x="46" y="265" text-anchor="end">25</text>
<text x="46" y="219" text-anchor="end">30</text>
<text x="46" y="173" text-anchor="end">35</text>
<text x="64.5" y="510" text-anchor="middle">0.5</text>
<text x="91.5" y="510" text-anchor="middle">1</text>
<text x="118.5" y="510" text-anchor="middle">2</text>
<text x="146.5" y="510" text-anchor="middle">4</text>
<text x="173.5" y="510" text-anchor="middle">8</text>
<text x="200.5" y="510" text-anchor="middle">16</text>
<text x="228.5" y="510" text-anchor="middle">32</text>
<text x="255.5" y="510" text-anchor="middle">64</text>
<text x="282.5" y="510" text-anchor="middle">128</text>
<text x="310.5" y="510" text-anchor="middle">256</text>
<text x="337.5" y="510" text-anchor="middle">512</text>
<text x="364.5" y="510" text-anchor="middle">1024</text>
<text x="392.5" y="510" text-anchor="middle">2048</text>
<text x="419.5" y="510" text-anchor="middle">4096</text>
<text x="446.5" y="510" text-anchor="middle">8192</text>
</g>
</svg>
<div class="tx" style="left:33.0px;top:10.84px;font-size:12px;line-height:16px;letter-spacing:-0.372px">HD</div>
<div class="tx" style="left:53.5px;top:10.84px;font-size:12px;line-height:16px;letter-spacing:-0.277px">Tune</div>
<div class="tx" style="left:83.4px;top:10.84px;font-size:12px;line-height:16px;letter-spacing:-0.296px">Pro</div>
<div class="tx" style="left:104.0px;top:10.84px;font-size:12px;line-height:16px;letter-spacing:-0.365px">4.60</div>
<div class="tx" style="left:130.0px;top:10.84px;font-size:12px;line-height:16px;letter-spacing:0.000px">-</div>
<div class="tx" style="left:138.4px;top:10.84px;font-size:12px;line-height:16px;letter-spacing:-0.429px">Hard</div>
<div class="tx" style="left:167.6px;top:10.84px;font-size:12px;line-height:16px;letter-spacing:-0.086px">Disk</div>
<div class="tx" style="left:193.7px;top:10.84px;font-size:12px;line-height:16px;letter-spacing:0.408px">Utility</div>
<div class="tx" style="left:228.4px;top:10.84px;font-size:12px;line-height:16px;letter-spacing:0.000px">(</div>
<div class="tx" style="left:239.0px;top:10.84px;font-size:12px;line-height:16px;letter-spacing:-0.173px">Registered</div>
<div class="tx" style="left:298.6px;top:10.84px;font-size:12px;line-height:16px;letter-spacing:0.000px">)</div>
<div class="tx" style="left:51px;top:65.39px;font-size:11px;line-height:15px;letter-spacing:-0.313px">Patriot Memory   (8 gB)</div>
<div class="tx" style="left:287.5px;top:66.69px;font-size:11px;line-height:15px;letter-spacing:0.000px;font-weight:bold;transform:scaleX(.78);transform-origin:0 0">—</div>
<div class="tx" style="left:300.5px;top:66.69px;font-size:11px;line-height:15px;letter-spacing:0.078px;font-weight:bold">°C</div>
<div class="tx" style="left:543px;top:65.19px;font-size:11px;line-height:15px;letter-spacing:-0.586px">Exit</div>
<div class="tx" style="left:62.5px;top:105.69px;font-size:11px;line-height:15px;letter-spacing:-0.349px">Benchmark</div>
<div class="tx" style="left:168px;top:105.69px;font-size:11px;line-height:15px;letter-spacing:-0.340px">Info</div>
<div class="tx" style="left:238.5px;top:105.69px;font-size:11px;line-height:15px;letter-spacing:-0.383px">Health</div>
<div class="tx" style="left:321px;top:105.69px;font-size:11px;line-height:15px;letter-spacing:-0.408px">Error Scan</div>
<div class="tx" style="left:423px;top:105.69px;font-size:11px;line-height:15px;letter-spacing:-0.337px">Folder Usage</div>
<div class="tx" style="left:538px;top:105.69px;font-size:11px;line-height:15px;letter-spacing:-0.850px">Erase</div>
<div class="tx" style="left:64px;top:123.69px;font-size:11px;line-height:15px;letter-spacing:-0.352px">File Benchmark</div>
<div class="tx" style="left:191px;top:125.69px;font-size:11px;line-height:15px;letter-spacing:-0.302px">Disk monitor</div>
<div class="tx" style="left:304px;top:125.69px;font-size:11px;line-height:15px;letter-spacing:-0.615px">AAM</div>
<div class="tx" style="left:381px;top:125.69px;font-size:11px;line-height:15px;letter-spacing:-0.191px">Random Access</div>
<div class="tx" style="left:514px;top:125.69px;font-size:11px;line-height:15px;letter-spacing:-0.452px">Extra tests</div>
<div class="tx" style="left:518px;top:159.69px;font-size:11px;line-height:15px;letter-spacing:-0.247px">Start</div>
<div class="tx" style="left:492px;top:192.69px;font-size:11px;line-height:15px;letter-spacing:-0.334px">Drive</div>
<div class="tx" style="left:496px;top:214.69px;font-size:11px;line-height:15px;letter-spacing:-0.312px">G:</div>
<div class="tx" style="left:492px;top:262.69px;font-size:11px;line-height:15px;letter-spacing:-0.433px">File length</div>
<div class="tx" style="left:496px;top:285.69px;font-size:11px;line-height:15px;letter-spacing:-0.359px">64 MB</div>
<div class="tx" style="left:492px;top:335.69px;font-size:11px;line-height:15px;letter-spacing:-0.425px">Delay</div>
<div class="tx" style="left:495.5px;top:357.09px;font-size:11px;line-height:15px;letter-spacing:0.000px">0</div>
</body></html>
